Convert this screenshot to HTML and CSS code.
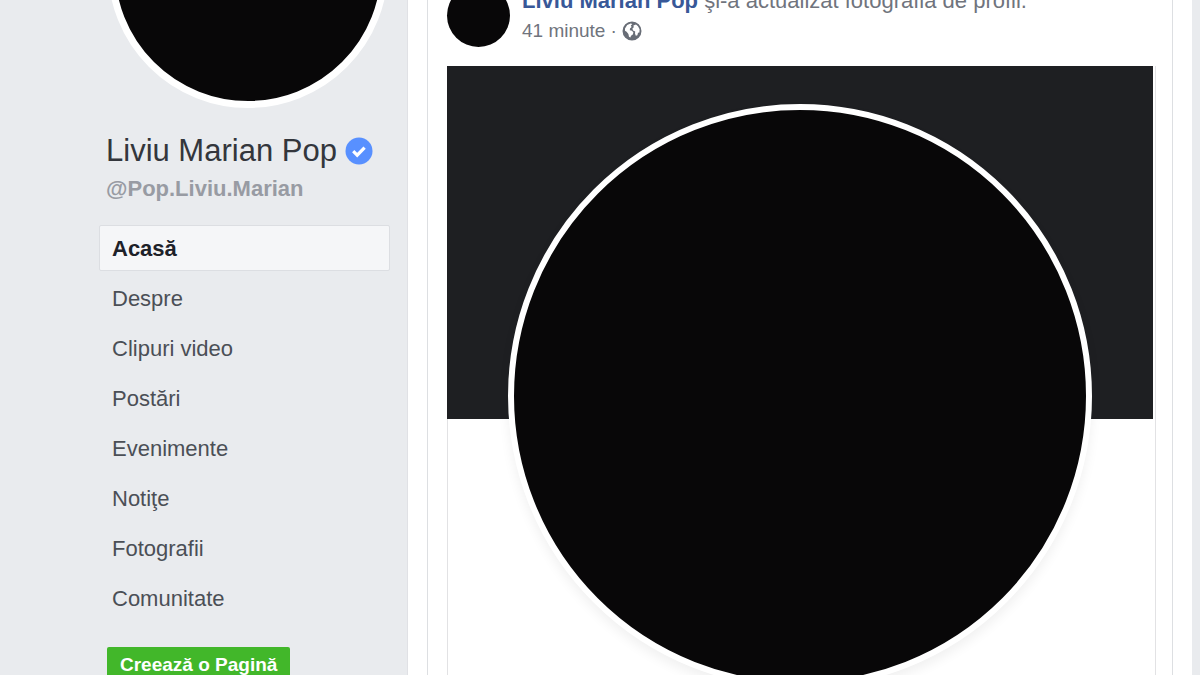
FILE: index.html
```html
<!DOCTYPE html>
<html lang="ro">
<head>
    <meta charset="UTF-8">
    <meta name="viewport" content="width=device-width, initial-scale=1.0">
    <title>Liviu Marian Pop</title>
    <link rel="stylesheet" href="styles.css">
</head>
<body>

    <div class="page">
        <aside class="sidebar">
            <div class="profile-pic"></div>
            <h1 class="name">
                Liviu Marian Pop
                <svg class="verified" viewBox="0 0 28 28" aria-hidden="true">
                    <circle cx="14" cy="14" r="13.5" fill="#5890ff"/>
                    <path d="M8.2 14.2l4 4 7.4-7.6" fill="none" stroke="#fff" stroke-width="3.2"/>
                </svg>
            </h1>
            <p class="handle">@Pop.Liviu.Marian</p>

            <nav class="menu">
                <a href="#" class="menu-item active">Acasă</a>
                <a href="#" class="menu-item">Despre</a>
                <a href="#" class="menu-item">Clipuri video</a>
                <a href="#" class="menu-item">Postări</a>
                <a href="#" class="menu-item">Evenimente</a>
                <a href="#" class="menu-item">Notiţe</a>
                <a href="#" class="menu-item">Fotografii</a>
                <a href="#" class="menu-item">Comunitate</a>
            </nav>

            <button type="button" class="create">Creează o Pagină</button>
        </aside>

        <main class="feed">
            <article class="post">
                <header class="post-header">
                    <div class="post-avatar"></div>
                    <div class="post-info">
                        <p class="post-title"><a href="#">Liviu Marian Pop</a> şi-a actualizat fotografia de profil.</p>
                        <p class="post-meta">
                            <span>41 minute</span>
                            <span>·</span>
                            <svg class="globe" viewBox="0 0 20 20" aria-hidden="true">
                                <circle cx="10" cy="10" r="8.8" fill="#686d76" stroke="#686d76" stroke-width="1.4"/>
                                <path d="M3 7.4L5.2 4l3.4-1.6 1.8.6-1.6 1.6.8 1.4-1.6 1.6-.2 1.6 2.2.6 1.4 1.6-.6 2-1.8 1.4-.6 1.8-1.4-.8-.6-2.8-1.8-2.2-1.6-1z" fill="#fff"/>
                                <path d="M11.4 4.4l2.6-.8 2 1.6 1.6 3-.2 3.2-1.4.4-.6 2.4-1.6.6-.8-2.2.2-2-2.2-1-.6-2 1.4-1.4z" fill="#fff"/>
                            </svg>
                        </p>
                    </div>
                </header>

                <div class="attachment">
                    <div class="photo">
                        <div class="cover"></div>
                        <div class="photo-circle"></div>
                    </div>
                </div>
            </article>
        </main>
    </div>

</body>
</html>
```

FILE: styles.css
```css
* {
    box-sizing: border-box;
}
body {
    margin: 0;
    font-family: "Liberation Sans", Arial, sans-serif;
    font-size: 22px;
    color: #4b4f56;
    background-color: #e9ebee;
}
a {
    text-decoration: none;
}
h1, p {
    margin: 0;
}
.page {
    display: grid;
    grid-template-columns: 407px 1fr;
    height: 100vh;
    padding-right: 8px;
    overflow: hidden;
}

/* left column */
.sidebar {
    padding: 0 17px 0 99px;
}
.profile-pic {
    width: 280px;
    height: 280px;
    margin: -172px 0 0 9px;
    border: 7px solid #fff;
    border-radius: 50%;
    background-color: #080708;
}
.name {
    display: flex;
    align-items: center;
    gap: 8px;
    margin: 24px 0 0 7px;
    font-size: 31px;
    font-weight: normal;
    line-height: 38px;
    color: #33363c;
    white-space: nowrap;
}
.verified {
    width: 28px;
    height: 28px;
}
.handle {
    margin: 6px 0 0 7px;
    line-height: 26px;
    font-weight: bold;
    color: #989ba3;
}
.menu {
    display: flex;
    flex-direction: column;
    gap: 4px;
    margin-top: 23px;
}
.menu-item {
    height: 46px;
    padding: 0 12px;
    border: 1px solid transparent;
    border-radius: 2px;
    line-height: 46px;
    color: #4b4f56;
}
.menu-item.active {
    background-color: #f5f6f8;
    border-color: #dcdee2;
    font-weight: bold;
    color: #1d2129;
}
.create {
    height: 36px;
    margin: 26px 0 0 8px;
    padding: 0 13px;
    border: none;
    border-radius: 2px;
    background-color: #42b72a;
    font-family: inherit;
    font-size: 19px;
    font-weight: bold;
    color: #fff;
    cursor: pointer;
}

/* post column */
.feed {
    padding: 0 19px;
    border-left: 1px solid #e0e1e5;
    background-color: #fff;
}
.post {
    display: flow-root;
    min-height: 100%;
    padding: 0 16px 0 19px;
    border: 1px solid #dddfe2;
    border-width: 0 1px;
}
.post-header {
    display: flex;
    gap: 12px;
    margin-top: -16px;
}
.post-avatar {
    width: 63px;
    height: 63px;
    border-radius: 50%;
    background-color: #080708;
}
.post-info {
    padding-top: 4px;
}
.post-title {
    line-height: 26px;
    color: #70747d;
}
.post-title a {
    font-weight: bold;
    color: #385898;
}
.post-meta {
    display: flex;
    align-items: center;
    gap: 5px;
    margin-top: 5px;
    font-size: 19px;
    line-height: 24px;
    color: #70747d;
}
.globe {
    width: 20px;
    height: 20px;
}
.attachment {
    margin-top: 19px;
    border: 1px solid #e2e2e4;
    border-width: 0 1px;
}
.photo {
    margin: 0 2px 0 -1px;
}
.cover {
    aspect-ratio: 2 / 1;
    background-color: #1e1f22;
}
.photo-circle {
    width: 584px;
    height: 584px;
    margin: -315px auto 0;
    border: 6px solid #fff;
    border-radius: 50%;
    background-color: #080708;
    box-shadow: 0 6px 12px rgba(0, 0, 0, 0.06);
}
```
